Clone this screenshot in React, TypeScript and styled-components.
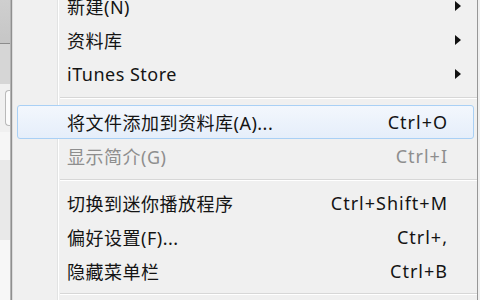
import React from "react";
import styled, { createGlobalStyle } from "styled-components";

const Global = createGlobalStyle`
  html, body { margin: 0; padding: 0; width: 480px; height: 300px; overflow: hidden; background: #f0f0f0; }
  #root { width: 480px; height: 300px; }
`;

const Screen = styled.div`
  display: flex;
  width: 480px;
  height: 300px;
  overflow: hidden;
`;

const BackWindow = styled.div`
  width: 10px;
  display: flex;
  flex-direction: column;
  flex-shrink: 0;
`;

const BackBand = styled.div<{ $h: number; $bg: string; $line?: string }>`
  height: ${(p) => p.$h}px;
  background: ${(p) => p.$bg};
  border-bottom: ${(p) => (p.$line ? `1px solid ${p.$line}` : "none")};
  flex-shrink: 0;
`;

const BackField = styled.div`
  height: 38px;
  margin: 6px 0 6px 5px;
  border: 1px solid #b9b9b9;
  border-right: none;
  border-radius: 4px 0 0 4px;
  background: #fbfbfb;
`;

const FrameEdge = styled.div`
  width: 3px;
  flex-shrink: 0;
  background: linear-gradient(to right, #b4b4b4 0 1px, #8f8f8f 1px 2px, #dcdcdc 2px 3px);
`;

const Menu = styled.div`
  flex: 1;
  position: relative;
  display: flex;
  flex-direction: column;
  background: #f0f0f0;
  border-right: 1px solid #979797;
  margin-right: 2px;
  font-family: "Noto Sans", "Noto Sans CJK SC", sans-serif;
  font-size: 18px;
  letter-spacing: 0.5px;
  color: #1a1a1a;
`;

const Gutter = styled.div`
  position: absolute;
  left: 44px;
  top: 0;
  bottom: 0;
  width: 1px;
  background: #e2e3e3;
  border-right: 1px solid #ffffff;
`;

const List = styled.div`
  display: flex;
  flex-direction: column;
  margin-top: -11px;
`;

const Row = styled.div<{ $active?: boolean; $disabled?: boolean }>`
  height: 34px;
  margin: 0 3px 0 4px;
  padding: 0 26px 0 49px;
  display: flex;
  align-items: center;
  box-sizing: border-box;
  position: relative;
  color: ${(p) => (p.$disabled ? "#8e8e8e" : "#141414")};
  border: 1px solid ${(p) => (p.$active ? "#a9d0f5" : "transparent")};
  border-radius: 3px;
  background: ${(p) =>
    p.$active ? "linear-gradient(to bottom, #f3f7fd, #e5eefa)" : "transparent"};
  z-index: 1;
`;

const Label = styled.span`
  flex: 1;
  white-space: nowrap;
`;

const Shortcut = styled.span`
  white-space: nowrap;
  letter-spacing: 1px;
  margin-right: -1px;
`;

const Arrow = styled.span`
  position: absolute;
  right: 12px;
  top: 50%;
  margin-top: -5px;
  width: 0;
  height: 0;
  border-top: 5px solid transparent;
  border-bottom: 5px solid transparent;
  border-left: 6px solid #111;
`;

const Separator = styled.div<{ $h: number }>`
  height: ${(p) => p.$h}px;
  display: flex;
  align-items: center;
  padding-left: 47px;
  position: relative;
  z-index: 1;
  &::after {
    content: "";
    flex: 1;
    height: 1px;
    background: #d7d7d7;
    border-bottom: 1px solid #ffffff;
  }
`;

type Item =
  | { kind: "item"; label: string; shortcut?: string; sub?: boolean; active?: boolean; disabled?: boolean }
  | { kind: "sep"; h: number };

const items: Item[] = [
  { kind: "item", label: "新建(N)", sub: true },
  { kind: "item", label: "资料库", sub: true },
  { kind: "item", label: "iTunes Store", sub: true },
  { kind: "sep", h: 14 },
  { kind: "item", label: "将文件添加到资料库(A)...", shortcut: "Ctrl+O", active: true },
  { kind: "item", label: "显示简介(G)", shortcut: "Ctrl+I", disabled: true },
  { kind: "sep", h: 13 },
  { kind: "item", label: "切换到迷你播放程序", shortcut: "Ctrl+Shift+M" },
  { kind: "item", label: "偏好设置(F)...", shortcut: "Ctrl+," },
  { kind: "item", label: "隐藏菜单栏", shortcut: "Ctrl+B" },
  { kind: "sep", h: 12 },
];

export default function App() {
  return (
    <>
      <Global />
      <Screen>
        <BackWindow>
          <BackBand $h={43} $bg="linear-gradient(to bottom, #cfcfcf, #c6c6c6)" $line="#8c8c8c" />
          <BackBand $h={40} $bg="#d6d6d6" />
          <BackField />
          <BackBand $h={28} $bg="#f6f6f6" />
          <BackBand $h={80} $bg="#e9e9e9" />
          <BackBand $h={60} $bg="#f7f7f7" />
        </BackWindow>
        <FrameEdge />
        <Menu>
          <Gutter />
          <List>
            {items.map((it, i) =>
              it.kind === "sep" ? (
                <Separator key={i} $h={it.h} />
              ) : (
                <Row key={i} $active={it.active} $disabled={it.disabled}>
                  <Label>{it.label}</Label>
                  {it.shortcut && <Shortcut>{it.shortcut}</Shortcut>}
                  {it.sub && <Arrow />}
                </Row>
              )
            )}
          </List>
        </Menu>
      </Screen>
    </>
  );
}
